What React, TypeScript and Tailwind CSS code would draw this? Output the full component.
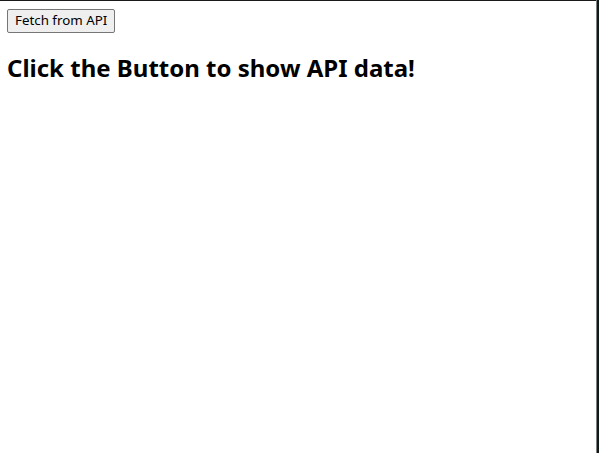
export default function App() {
  return (
    <div className="w-[599px] h-[453px] flex bg-white" style={{ fontFamily: '"Noto Sans", sans-serif' }}>
      <div className="flex-1 border-t border-[#1a1a1a] px-[7px] pt-2">
        <button className="block h-6 px-[7px] text-[13.33px] leading-none text-black bg-[#efefef] border border-[#767676] rounded-[2px]">
          Fetch from API
        </button>
        <h2 className="mt-[19px] text-2xl font-bold text-black leading-[1.362]">Click the Button to show API data!</h2>
      </div>
      <div className="w-[3px] flex">
        <div className="w-px bg-[#808080]"></div>
        <div className="w-[2px] bg-[#0d1a1a]"></div>
      </div>
    </div>
  );
}
